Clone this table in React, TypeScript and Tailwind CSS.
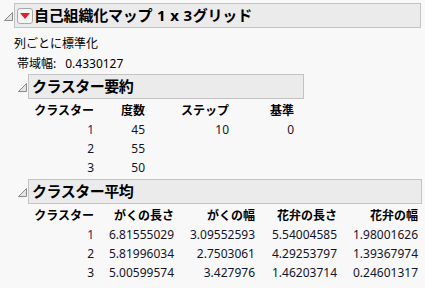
import React from "react";

const FONT = { fontFamily: '"Noto Sans", "Noto Sans CJK JP", sans-serif' };

function Tri() {
  return (
    <svg width="9" height="9" viewBox="0 0 9 9" className="shrink-0">
      <polygon points="8.5,0.5 8.5,8.5 0.5,8.5" fill="#e4e4e4" stroke="#8a8a8a" strokeWidth="1" />
    </svg>
  );
}

function RedBtn() {
  return (
    <div className="w-[16px] h-[16px] rounded-[3px] border border-[#a8a8a8] bg-[#f4f4f4] flex items-center justify-center shrink-0">
      <svg width="10" height="6" viewBox="0 0 10 6">
        <polygon points="0,0 10,0 5,6" fill="#e0202a" />
      </svg>
    </div>
  );
}

function Cell({ w, children, bold, purple }: { w: number; children?: React.ReactNode; bold?: boolean; purple?: boolean }) {
  return (
    <div
      className={`shrink-0 text-right whitespace-nowrap ${bold ? "font-bold text-black" : purple ? "text-[#4a1458]" : "text-[#141428]"}`}
      style={{ width: w }}
    >
      {children}
    </div>
  );
}

export default function App() {
  const sumW = [60, 51, 84, 65];
  const meanW = [60, 80, 81, 82, 81];
  const sumRows = [
    ["1", "45", "10", "0"],
    ["2", "55", "", ""],
    ["3", "50", "", ""],
  ];
  const meanRows = [
    ["1", "6.81555029", "3.09552593", "5.54004585", "1.98001626"],
    ["2", "5.81996034", "2.7503061", "4.29253797", "1.39367974"],
    ["3", "5.00599574", "3.427976", "1.46203714", "0.24601317"],
  ];
  return (
    <div className="w-[425px] h-[288px] bg-[#f8f8f8] overflow-hidden text-[12px] text-black" style={FONT}>
      <div className="flex items-center pt-[3px] pl-[4px] gap-[1px]">
        <div className="pt-[1px]"><Tri /></div>
        <div className="w-[407px] h-[25px] border border-[#c3c3c3] bg-[#ebebeb] flex items-center pl-[2px] gap-[1px]">
          <RedBtn />
          <span className="font-bold text-[15px] leading-none tracking-[-0.2px] whitespace-pre">
            自己組織化マップ <span className="px-[1px]">1</span> x <span className="px-[1px]">3</span>グリッド
          </span>
        </div>
      </div>

      <div className="pl-[14px] pt-[8px] leading-[15px]">列ごとに標準化</div>
      <div className="pl-[17px] pt-[5px] leading-[15px] flex">
        <span>帯域幅:</span>
        <span className="pl-[9px]">0.4330127</span>
      </div>

      <div className="flex items-center pt-[3px] pl-[18px] gap-[1px]">
        <div className="pt-[1px]"><Tri /></div>
        <div className="w-[276px] h-[25px] border border-[#c3c3c3] bg-[#ebebeb] flex items-center pl-[3px]">
          <span className="font-bold text-[15px] leading-none tracking-[-0.5px]">クラスター要約</span>
        </div>
      </div>

      <div className="pl-[34px] pt-[2px]">
        <div className="flex h-[19px] items-center">
          <Cell w={sumW[0]} bold>クラスター</Cell>
          <Cell w={sumW[1]} bold>度数</Cell>
          <Cell w={sumW[2]} bold>ステップ</Cell>
          <Cell w={sumW[3]} bold>基準</Cell>
        </div>
        {sumRows.map((r, i) => (
          <div key={i} className="flex h-[19px] items-center">
            {r.map((c, j) => (
              <Cell key={j} w={sumW[j]} purple={i === 0 && j === 0}>{c}</Cell>
            ))}
          </div>
        ))}
      </div>

      <div className="flex items-center pt-[2px] pl-[18px] gap-[1px]">
        <div className="pt-[1px]"><Tri /></div>
        <div className="w-[394px] h-[25px] border border-[#c3c3c3] bg-[#ebebeb] flex items-center pl-[3px]">
          <span className="font-bold text-[15px] leading-none tracking-[-0.5px]">クラスター平均</span>
        </div>
      </div>

      <div className="pl-[34px] pt-[2px]">
        <div className="flex h-[19px] items-center">
          <Cell w={meanW[0]} bold>クラスター</Cell>
          <Cell w={meanW[1]} bold>がくの長さ</Cell>
          <Cell w={meanW[2]} bold>がくの幅</Cell>
          <Cell w={meanW[3]} bold>花弁の長さ</Cell>
          <Cell w={meanW[4]} bold>花弁の幅</Cell>
        </div>
        {meanRows.map((r, i) => (
          <div key={i} className="flex h-[19px] items-center">
            {r.map((c, j) => (
              <Cell key={j} w={meanW[j]} purple={i === 0 && j === 0}>{c}</Cell>
            ))}
          </div>
        ))}
      </div>
    </div>
  );
}
